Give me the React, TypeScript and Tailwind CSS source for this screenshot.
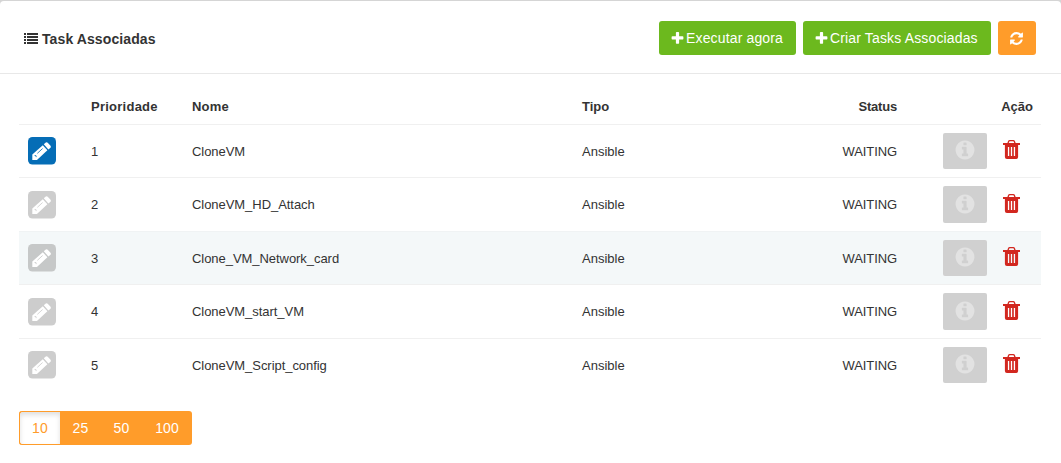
const FA = {
  plus: 'M1600 736v192q0 40-28 68t-68 28h-416v416q0 40-28 68t-68 28h-192q-40 0-68-28t-28-68v-416h-416q-40 0-68-28t-28-68v-192q0-40 28-68t68-28h416v-416q0-40 28-68t68-28h192q40 0 68 28t28 68v416h416q40 0 68 28t28 68z',
  refresh:
    'M1639 1056q0 5-1 7-64 268-268 434.500t-478 166.500q-146 0-282.500-55t-243.500-157l-129 129q-19 19-45 19t-45-19-19-45v-448q0-26 19-45t45-19h448q26 0 45 19t19 45-19 45l-137 137q71 66 161 102t187 36q134 0 250-65t186-179q11-17 53-117 8-23 30-23h192q13 0 22.500 9.500t9.500 22.500zm25-800v448q0 26-19 45t-45 19h-448q-26 0-45-19t-19-45 19-45l138-138q-148-137-349-137-134 0-250 65t-186 179q-11 17-53 117-8 23-30 23h-199q-13 0-22.500-9.500t-9.500-22.500v-7q65-268 270-434.500t480-166.500q146 0 284 55.500t245 156.500l130-129q19-19 45-19t45 19 19 45z',
  info: 'M1152 1376v-160q0-14-9-23t-23-9h-96v-512q0-14-9-23t-23-9h-320q-14 0-23 9t-9 23v160q0 14 9 23t23 9h96v320h-96q-14 0-23 9t-9 23v160q0 14 9 23t23 9h448q14 0 23-9t9-23zm-128-896v-160q0-14-9-23t-23-9h-192q-14 0-23 9t-9 23v160q0 14 9 23t23 9h192q14 0 23-9t9-23zm640 416q0 209-103 385.500t-279.500 279.500-385.500 103-385.500-103-279.500-279.500-103-385.500 103-385.500 279.500-279.500 385.500-103 385.500 103 279.500 279.500 103 385.500z',
};

function Icon({ d, className }: { d: string; className: string }) {
  return (
    <svg viewBox="0 0 1792 1792" fill="currentColor" className={className} aria-hidden="true">
      <path d={d} />
    </svg>
  );
}

function ListIcon() {
  return (
    <svg viewBox="0 0 14 11" fill="currentColor" className="h-[11px] w-[14px]" aria-hidden="true">
      {[0, 3, 6, 9].map((y) => (
        <g key={y}>
          <rect x="0" y={y} width="2" height="2" />
          <rect x="3" y={y} width="11" height="2" />
        </g>
      ))}
    </svg>
  );
}

function TrashIcon() {
  return (
    <svg viewBox="0 0 17 20" className="h-5 w-[17px]" fill="currentColor" aria-hidden="true">
      <path d="M5 3.300 5.600 1.500q.3-.8 1.100-.8h3.600q.8 0 1.100.8l.6 1.800" fill="none" stroke="currentColor" strokeWidth="1.300" />
      <path d="M0 3h17v2H0z" />
      <path
        fillRule="evenodd"
        d="M1.900 4.500h13.200v12.500q0 2-2 2H3.900q-2 0-2-2zM4.900 7v9h1.300V7zM7.850 7v9h1.300V7zM10.800 7v9h1.300V7z"
      />
    </svg>
  );
}

function PencilIcon() {
  return (
    <svg viewBox="0 0 28 28" className="size-7" aria-hidden="true">
      <rect width="28" height="27.500" rx="4.500" fill="currentColor" />
      <path d="M4.300 17.500 14.800 8.300l4.600 4.900L9.500 22.400q-.6.500-1.400.5H4.300z" fill="#fff" />
      <path d="m15.800 7.300 2-1.700q1-.8 1.900.1l2.800 3q.8 1 0 2l-2.100 1.700z" fill="#fff" />
      <path d="m9.300 16.400 5.300-4.900M6.600 18.500l1.400.1.200 1.500" fill="none" stroke="currentColor" strokeWidth=".8" />
    </svg>
  );
}

const COLS = 'grid grid-cols-[64px_101px_390px_199px_132px_136px]';

const odd = { icon: 'pt-0', info: 'h-9' };
const even = { icon: 'pt-px', info: 'h-[37px]' };

const rows = [
  { n: 1, name: 'CloneVM', box: 'h-[53px] border-[#f0f0f0]', edit: 'text-[#056db6]', ...odd },
  { n: 2, name: 'CloneVM_HD_Attach', box: 'h-[54px] border-[#f0f0f0]', edit: 'text-[#cdcdcd]', ...even },
  { n: 3, name: 'Clone_VM_Network_card', box: 'h-[53px] border-[#f0f3f4] bg-[#f4f8f9]', edit: 'text-[#c6c8c8]', ...odd },
  { n: 4, name: 'CloneVM_start_VM', box: 'h-[54px] border-[#f0f0f0]', edit: 'text-[#cdcdcd]', ...even },
  { n: 5, name: 'CloneVM_Script_config', box: 'h-[53px] border-[#f0f0f0]', edit: 'text-[#cdcdcd]', ...odd },
];

export default function App() {
  return (
    <div className="h-[463px] w-[1061px] overflow-hidden bg-[#d5d5d5] pt-px font-['Liberation_Sans',Arial,sans-serif] text-[13px] leading-[18px] text-[#333]">
      <main className="h-[462px] rounded-t-[4px] bg-white">
        <header className="flex h-[73px] items-center justify-between border-b border-[#e8e8e8] pr-[25px] pl-6">
          <h1 className="flex items-center gap-[4px] pt-[3px] text-[14px] font-bold tracking-[0.1px]">
            <ListIcon />
            <span className="pt-px">Task Associadas</span>
          </h1>
          <div className="flex gap-[7px] pt-[2px] text-[14px] tracking-[0.15px] text-white">
            <button className="flex h-[34px] w-[137px] items-center gap-px rounded-[3px] bg-[#6cb91e] pl-[11px]">
              <Icon d={FA.plus} className="size-[15px]" />
              <span className="whitespace-nowrap">Executar agora</span>
            </button>
            <button className="flex h-[34px] w-[188px] items-center gap-px rounded-[3px] bg-[#6cb91e] pl-[11px]">
              <Icon d={FA.plus} className="size-[15px]" />
              <span className="whitespace-nowrap">Criar Tasks Associadas</span>
            </button>
            <button aria-label="Atualizar" className="flex h-[34px] w-[38px] items-center justify-center rounded-[3px] bg-[#ff9c2a] pr-px">
              <Icon d={FA.refresh} className="size-[15px]" />
            </button>
          </div>
        </header>

        <section className="pr-5 pl-[19px] pt-[14px]">
          <div className={COLS + ' h-9 items-center pt-[2px] font-bold'}>
            <span />
            <span className="pl-2 tracking-[0.25px]">Prioridade</span>
            <span className="pl-2 tracking-[0.2px]">Nome</span>
            <span className="pl-2">Tipo</span>
            <span className="pr-[8px] text-right tracking-[-0.2px]">Status</span>
            <span className="pr-2 text-right">Ação</span>
          </div>
          {rows.map((r) => (
            <div key={r.n} className={COLS + ' items-start border-t pt-2 ' + r.box}>
              <div className={r.icon}>
                <button aria-label="Editar" className={'mt-1 ml-[9px] block size-7 ' + r.edit}>
                  <PencilIcon />
                </button>
              </div>
              <span className="pt-[10px] pl-2">{r.n}</span>
              <span className="pt-[10px] pl-2 tracking-[-0.05px]">{r.name}</span>
              <span className="pt-[10px] pl-2">Ansible</span>
              <span className="pt-[10px] pr-[8px] text-right tracking-[-0.1px]">WAITING</span>
              <div className="flex items-start pl-[38px]">
                <button
                  aria-label="Informações"
                  className={'flex w-11 items-start justify-center rounded-[2px] bg-[#d0d0d0] pr-px text-[#e2e2e2] ' + r.info}
                >
                  <span className={r.icon}>
                    <Icon d={FA.info} className="mt-[6px] size-[22px]" />
                  </span>
                </button>
                <div className={r.icon}>
                  <button aria-label="Excluir" className="mt-[7px] ml-4 block text-[#d2271f]">
                    <TrashIcon />
                  </button>
                </div>
              </div>
            </div>
          ))}
          <div className="mt-5 flex h-[34px] w-[173px] overflow-hidden rounded-[3px] bg-[#ff9c2a] text-[14px] tracking-[0.1px] text-white">
            <button className="w-[41px] rounded-l-[3px] border border-r-0 border-[#ff9c2a] bg-white text-[#ff9c2a] shadow-[inset_0_3px_5px_rgba(0,0,0,0.125)]">
              10
            </button>
            <button className="w-[41px]">25</button>
            <button className="w-[41px]">50</button>
            <button className="w-[50px]">100</button>
          </div>
        </section>
      </main>
    </div>
  );
}
